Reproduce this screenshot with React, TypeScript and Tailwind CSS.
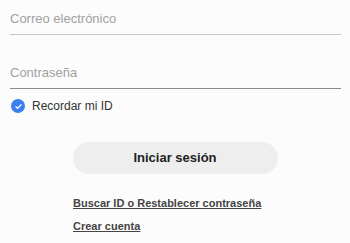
import React from "react";

export default function App() {
  return (
    <div
      className="w-[350px] h-[243px] bg-[#fcfcfc] overflow-hidden"
      style={{ fontFamily: '"Liberation Sans", Arial, sans-serif' }}
    >
      <div className="px-[10px] mr-[-1px]">
        <div className="pt-[11px] pb-[7px] border-b border-[#c8c8c8] text-[13px] leading-[16px] text-[#a0a0a0]">
          Correo electrónico
        </div>
        <div className="pt-[30px] pb-[7px] border-b border-[#8a8a8a] text-[13px] leading-[16px] text-[#a0a0a0]">
          Contraseña
        </div>
        <div className="mt-[10px] flex items-center h-[14px]">
          <div className="ml-[1px] w-[14px] h-[14px] rounded-full bg-[#3c80ef] flex items-center justify-center">
            <svg width="9" height="9" viewBox="0 0 24 24" fill="none">
              <path d="M5 12.5l4.5 4.5L19 7.5" stroke="white" strokeWidth="3.4" strokeLinecap="round" strokeLinejoin="round" />
            </svg>
          </div>
          <span className="ml-[7px] text-[12px] leading-[14px] text-[#333333]">Recordar mi ID</span>
        </div>
      </div>
      <div className="mt-[29px] mx-auto w-[205px] h-[32px] rounded-full bg-[#eeeeee] flex items-center justify-center text-[13px] font-bold text-[#222222]">
        Iniciar sesión
      </div>
      <div className="ml-[73px] mt-[23px] flex flex-col items-start">
        <span className="text-[11px] leading-[13px] font-bold text-[#444444] underline">
          Buscar ID o Restablecer contraseña
        </span>
        <span className="mt-[10px] text-[11px] leading-[13px] font-bold text-[#444444] underline">
          Crear cuenta
        </span>
      </div>
    </div>
  );
}
